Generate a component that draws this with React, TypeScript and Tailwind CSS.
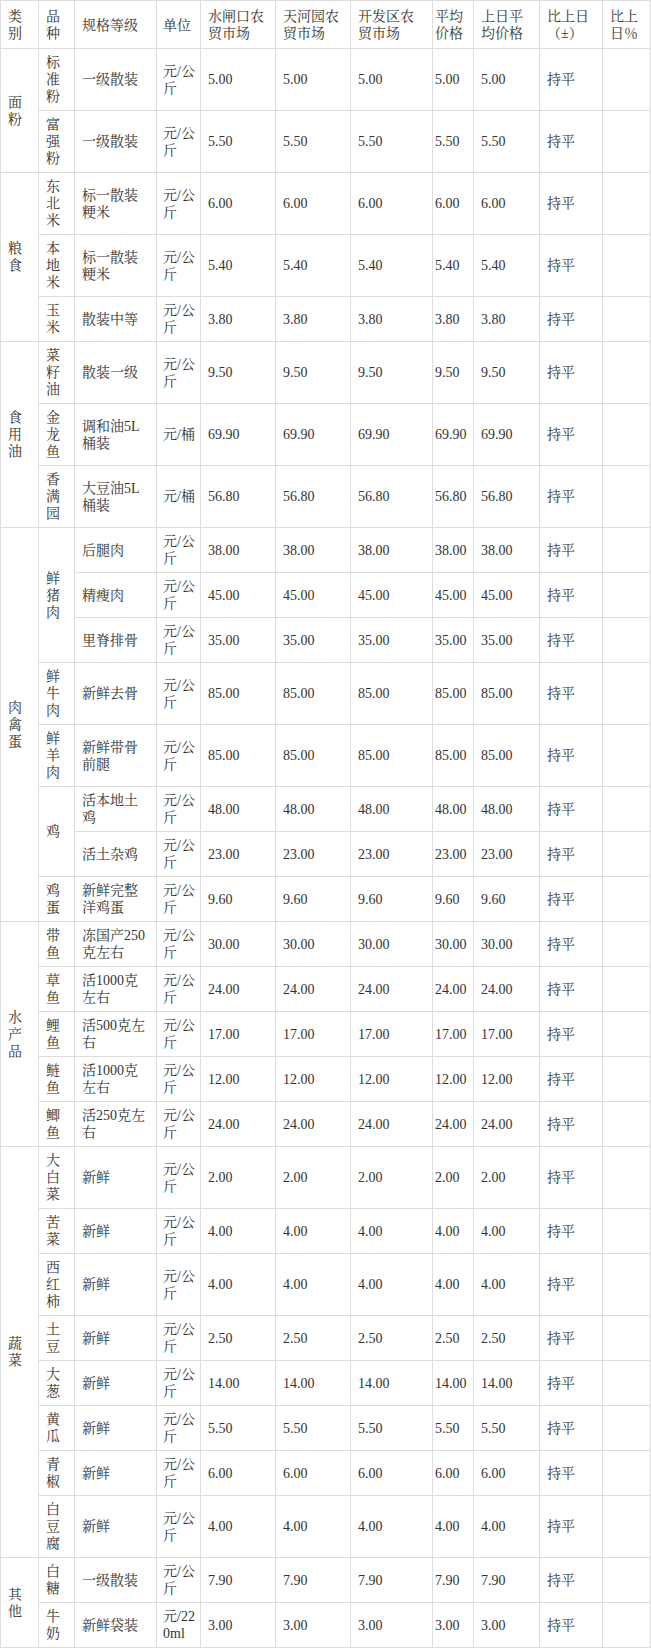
type Row = {
  cat?: string;
  catSpan?: number;
  kind?: string;
  kindSpan?: number;
  spec: string;
  unit: string;
  price: string;
};

const KG = "元/公斤";

const rows: Row[] = [
  { cat: "面粉", catSpan: 2, kind: "标准粉", spec: "一级散装", unit: KG, price: "5.00" },
  { kind: "富强粉", spec: "一级散装", unit: KG, price: "5.50" },

  { cat: "粮食", catSpan: 3, kind: "东北米", spec: "标一散装粳米", unit: KG, price: "6.00" },
  { kind: "本地米", spec: "标一散装粳米", unit: KG, price: "5.40" },
  { kind: "玉米", spec: "散装中等", unit: KG, price: "3.80" },

  { cat: "食用油", catSpan: 3, kind: "菜籽油", spec: "散装一级", unit: KG, price: "9.50" },
  { kind: "金龙鱼", spec: "调和油5L桶装", unit: "元/桶", price: "69.90" },
  { kind: "香满园", spec: "大豆油5L桶装", unit: "元/桶", price: "56.80" },

  { cat: "肉禽蛋", catSpan: 8, kind: "鲜猪肉", kindSpan: 3, spec: "后腿肉", unit: KG, price: "38.00" },
  { spec: "精瘦肉", unit: KG, price: "45.00" },
  { spec: "里脊排骨", unit: KG, price: "35.00" },
  { kind: "鲜牛肉", spec: "新鲜去骨", unit: KG, price: "85.00" },
  { kind: "鲜羊肉", spec: "新鲜带骨前腿", unit: KG, price: "85.00" },
  { kind: "鸡", kindSpan: 2, spec: "活本地土鸡", unit: KG, price: "48.00" },
  { spec: "活土杂鸡", unit: KG, price: "23.00" },
  { kind: "鸡蛋", spec: "新鲜完整洋鸡蛋", unit: KG, price: "9.60" },

  { cat: "水产品", catSpan: 5, kind: "带鱼", spec: "冻国产250克左右", unit: KG, price: "30.00" },
  { kind: "草鱼", spec: "活1000克左右", unit: KG, price: "24.00" },
  { kind: "鲤鱼", spec: "活500克左右", unit: KG, price: "17.00" },
  { kind: "鲢鱼", spec: "活1000克左右", unit: KG, price: "12.00" },
  { kind: "鲫鱼", spec: "活250克左右", unit: KG, price: "24.00" },

  { cat: "蔬菜", catSpan: 8, kind: "大白菜", spec: "新鲜", unit: KG, price: "2.00" },
  { kind: "苦菜", spec: "新鲜", unit: KG, price: "4.00" },
  { kind: "西红柿", spec: "新鲜", unit: KG, price: "4.00" },
  { kind: "土豆", spec: "新鲜", unit: KG, price: "2.50" },
  { kind: "大葱", spec: "新鲜", unit: KG, price: "14.00" },
  { kind: "黄瓜", spec: "新鲜", unit: KG, price: "5.50" },
  { kind: "青椒", spec: "新鲜", unit: KG, price: "6.00" },
  { kind: "白豆腐", spec: "新鲜", unit: KG, price: "4.00" },

  { cat: "其他", catSpan: 2, kind: "白糖", spec: "一级散装", unit: KG, price: "7.90" },
  { kind: "牛奶", spec: "新鲜袋装", unit: "元/220ml", price: "3.00" },
];

const widths = [38, 36, 82, 44, 75, 75, 82, 41, 66, 63, 48];

// most cells share one padding; the unit and average columns sit tighter
const td = "border border-[#dddddd] pl-[7px] pr-[6px] py-[5px] align-middle";
const tdUnit = "border border-[#dddddd] pl-[6px] pr-[3px] py-[5px] align-middle break-all";
const tdAvg = "border border-[#dddddd] pl-[2px] pr-[4px] py-[5px] align-middle";

const th = "border border-[#dddddd] pl-[7px] pr-[6px] pt-[7px] pb-[6px] align-middle text-left font-normal";
const thUnit = "border border-[#dddddd] pl-[6px] pr-[3px] pt-[7px] pb-[6px] align-middle text-left font-normal";
const thAvg = "border border-[#dddddd] pl-[2px] pr-[4px] pt-[7px] pb-[6px] align-middle text-left font-normal";

export default function App() {
  return (
    <div className="bg-white">
      <table className="w-[651px] table-fixed border-collapse text-[14px] leading-[17px] text-[#333333] font-['Liberation_Serif','Noto_Serif_CJK_SC','Noto_Sans_CJK_SC',serif]">
        <colgroup>
          {widths.map((w, i) => (
            <col key={i} style={{ width: w }} />
          ))}
        </colgroup>
        <thead>
          <tr>
            <th className={th}>类别</th>
            <th className={th}>品种</th>
            <th className={th}>规格等级</th>
            <th className={thUnit}>单位</th>
            <th className={th}>水闸口农贸市场</th>
            <th className={th}>天河园农贸市场</th>
            <th className={th}>开发区农贸市场</th>
            <th className={thAvg}>平均价格</th>
            <th className={th}>上日平均价格</th>
            <th className={th}>比上日（±）</th>
            <th className={th}>比上日％</th>
          </tr>
        </thead>
        <tbody>
          {rows.map((r, idx) => (
            <tr key={idx}>
              {r.cat && (
                <td rowSpan={r.catSpan} className={td}>
                  {r.cat}
                </td>
              )}
              {r.kind && (
                <td rowSpan={r.kindSpan ?? 1} className={td}>
                  {r.kind}
                </td>
              )}
              <td className={td}>{r.spec}</td>
              <td className={tdUnit}>{r.unit}</td>
              <td className={td}>{r.price}</td>
              <td className={td}>{r.price}</td>
              <td className={td}>{r.price}</td>
              <td className={tdAvg}>{r.price}</td>
              <td className={td}>{r.price}</td>
              <td className={td}>持平</td>
              <td className={td}></td>
            </tr>
          ))}
        </tbody>
      </table>
    </div>
  );
}
